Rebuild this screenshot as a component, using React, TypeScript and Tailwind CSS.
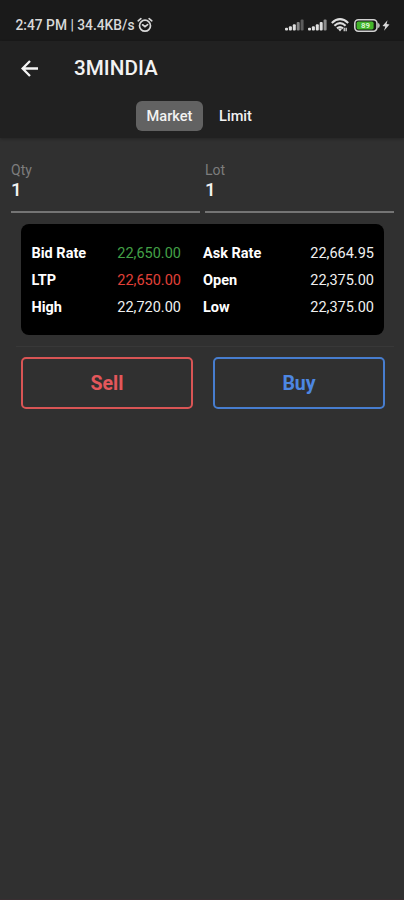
import React, { useState } from "react";

const quotes = [
  { label: "Bid Rate", value: "22,650.00", color: "text-[#43a047]" },
  { label: "Ask Rate", value: "22,664.95", color: "text-[#f0f0f0]" },
  { label: "LTP", value: "22,650.00", color: "text-[#e04038]" },
  { label: "Open", value: "22,375.00", color: "text-[#f0f0f0]" },
  { label: "High", value: "22,720.00", color: "text-[#f0f0f0]" },
  { label: "Low", value: "22,375.00", color: "text-[#f0f0f0]" },
];

const AlarmIcon = () => (
  <svg width="16" height="16" viewBox="0 0 16 16" fill="none" stroke="#d8d8d8" strokeWidth="1.7" strokeLinecap="round">
    <circle cx="8" cy="8.7" r="5.5" />
    <path d="M1.2 3.8 3.9 1.7M14.8 3.8 12.1 1.7M5.6 7.8 8 9.6l2.6-2" />
  </svg>
);

const SignalIcon = ({ weak }: { weak?: boolean }) => (
  <svg width="19" height="12" viewBox="0 0 19 12" fill="#dedede">
    <rect x="0" y="8.7" width="3" height="2.8" rx="1" />
    <rect x="3.9" y="7.3" width="3" height="4.2" rx="1" />
    <rect x="7.8" y="5.3" width="3" height="6.2" rx="1" />
    <rect x="11.7" y="3" width="3" height="8.5" rx="1" fill={weak ? "#858585" : "#dedede"} />
    <rect x="15.6" y=".5" width="3" height="11" rx="1" fill={weak ? "#5c5c5c" : "#8d8d8d"} />
  </svg>
);

const WifiIcon = () => (
  <svg width="18" height="14" viewBox="0 0 18 14" fill="none" stroke="#dedede" strokeWidth="2.1">
    <path d="M.8 5Q9-2.6 17.2 5M3.4 7.8Q9 2.6 14.6 7.8M6 10.4Q9 7.7 12 10.4" />
    <path d="M9 10.2 7.2 11.3 9 13.4 10.8 11.3Z" fill="#dedede" stroke="none" />
    <path d="M13.3 9.8v3.4M15.2 9.8v3.4" stroke="#bcbcbc" strokeWidth="1.5" />
  </svg>
);

const BatteryIcon = () => (
  <svg width="26" height="13" viewBox="0 0 26 13">
    <rect x=".8" y=".8" width="22.2" height="11.4" rx="3.6" fill="#151515" stroke="#d2d2d2" strokeWidth="1.6" />
    <path d="M24.1 4q1.6.3 1.6 2.5t-1.6 2.5z" fill="#d2d2d2" />
    <rect x="2.6" y="2.5" width="17" height="8" rx="1.7" fill="#43b52b" />
    <text x="11.6" y="9.3" fill="#d5f3cc" fontFamily="Roboto, sans-serif" fontSize="7.8" fontWeight="700" textAnchor="middle">89</text>
  </svg>
);

const BoltIcon = () => (
  <svg width="8" height="11" viewBox="0 0 8 11" fill="#d8d8d8">
    <path d="M5.5.2.5 6.1l2.8.3L2 10.8l5.5-6.3-2.9-.4z" />
  </svg>
);

const OrderPage = () => {
  const [type, setType] = useState("Market");
  const [qty, setQty] = useState("1");
  const [lot, setLot] = useState("1");

  const fields = [
    { label: "Qty", value: qty, onChange: setQty },
    { label: "Lot", value: lot, onChange: setLot },
  ];

  return (
    <div className="flex h-[900px] w-[404px] flex-col overflow-hidden border-b border-[#392e31] bg-[#303030] font-[Roboto,sans-serif] text-[#f2f2f2]">
      <div className="flex h-[41px] shrink-0 items-center justify-between bg-[#1a1a1a] pt-[9px] pr-[14px] pl-[15.5px]">
        <div className="flex items-center">
          <span className="w-[119px] text-[13.8px] font-medium whitespace-nowrap text-[#d8d8d8]">2:47 PM | 34.4KB/s</span>
          <span className="ml-[2px]"><AlarmIcon /></span>
        </div>
        <div className="flex items-center">
          <SignalIcon weak />
          <span className="ml-1"><SignalIcon /></span>
          <span className="ml-[4px]"><WifiIcon /></span>
          <span className="ml-[5px]"><BatteryIcon /></span>
          <span className="ml-[2px]"><BoltIcon /></span>
        </div>
      </div>

      <header className="h-[97px] shrink-0 bg-[#212121] shadow-[0_1px_3px_rgba(0,0,0,0.25)]">
        <div className="flex h-[54px] items-center pt-px pl-[21px]">
          <button type="button" aria-label="Back">
            <svg width="17" height="17" viewBox="0 0 17 17" fill="none" stroke="#f5f5f5" strokeWidth="2.3">
              <path d="M9 1 1.6 8.5 9 16M1.8 8.5H17" />
            </svg>
          </button>
          <h1 className="ml-[36px] pt-px text-[20.7px] font-medium">3MINDIA</h1>
        </div>
        <div className="mt-[6px] flex pl-[136px]">
          {["Market", "Limit"].map((name) => (
            <button
              key={name}
              type="button"
              onClick={() => setType(name)}
              className={`h-[30px] rounded-[6px] pt-[2px] text-[14.6px] font-medium ${type === name ? "w-[67px] bg-[#626262]" : "w-[65px]"}`}
            >
              {name}
            </button>
          ))}
        </div>
      </header>

      <div className="grid grid-cols-2 gap-[5px] pt-[23px] pr-[10px] pl-[11px]">
        {fields.map(({ label, value, onChange }) => (
          <label key={label} className="flex h-[52px] flex-col border-b-2 border-[#747474]">
            <span className="text-[14px] leading-[18px] text-[#7d7d7d]">{label}</span>
            <input
              value={value}
              onChange={(e) => onChange(e.target.value)}
              className="h-[22px] w-full bg-transparent text-[19px] font-medium outline-none"
            />
          </label>
        ))}
      </div>

      <div className="mt-[11px] mr-[20px] ml-[21px] grid h-[111px] grid-cols-[149.5px_171px] content-start gap-x-[22px] rounded-[8px] bg-black pt-[16px] pl-[10.5px]">
        {quotes.map(({ label, value, color }) => (
          <div key={label} className="flex h-[27px] items-center justify-between text-[14.5px]">
            <span className="font-bold text-white">{label}</span>
            <span className={color}>{value}</span>
          </div>
        ))}
      </div>

      <div className="mt-[11px] mr-[10px] ml-[16px] h-px bg-[#383838]" />

      <div className="mt-[10px] mr-[19px] ml-[21px] flex justify-between">
        <button type="button" className="h-[52px] w-[172px] rounded-[5px] border-2 border-[#d95555] pt-[2px] text-[19.5px] leading-[24px] font-bold text-[#e4575b]">
          Sell
        </button>
        <button type="button" className="h-[52px] w-[172px] rounded-[5px] border-2 border-[#477dce] pt-[2px] text-[19.5px] leading-[24px] font-bold text-[#4d87e2]">
          Buy
        </button>
      </div>
    </div>
  );
};

export default OrderPage;
